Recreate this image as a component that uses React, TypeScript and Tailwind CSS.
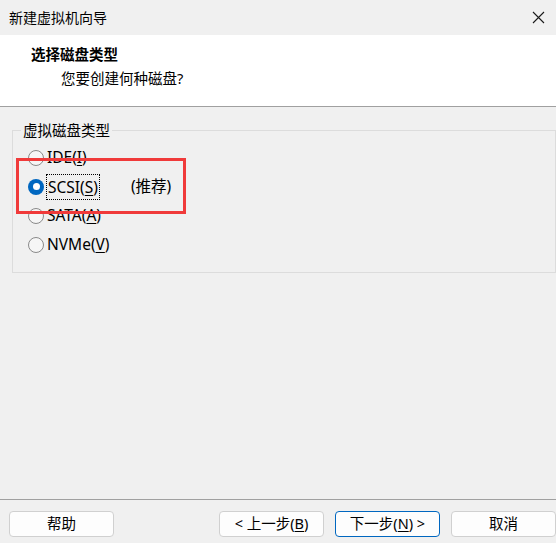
import React, { useState } from 'react';

const font = { fontFamily: '"Noto Sans", "Noto Sans CJK SC", sans-serif' };

const Mn: React.FC<{ c: string }> = ({ c }) => <span className="underline underline-offset-2">{c}</span>;

const Radio: React.FC<{ checked: boolean; onClick: () => void; children: React.ReactNode }> = ({ checked, onClick, children }) => (
  <div className="flex items-center h-[29px] cursor-default" onClick={onClick}>
    {checked ? (
      <span className="w-[16px] h-[16px] rounded-full bg-[#0067c0] flex items-center justify-center">
        <span className="w-[7px] h-[7px] rounded-full bg-white" />
      </span>
    ) : (
      <span className="w-[16px] h-[16px] rounded-full border border-[#8a8a8a] bg-[#f6f6f6]" />
    )}
    <div className="ml-[3px] flex items-center">{children}</div>
  </div>
);

const Btn: React.FC<{ primary?: boolean; children: React.ReactNode }> = ({ primary, children }) => (
  <button
    className={
      'w-[105px] h-[26px] rounded-[4px] bg-[#fdfdfd] text-[14.5px] text-black flex items-center justify-center ' +
      (primary ? 'border border-[#0067c0]' : 'border border-[#d0d0d0]')
    }
  >
    {children}
  </button>
);

const App: React.FC = () => {
  const [disk, setDisk] = useState('scsi');

  return (
    <div className="relative w-[556px] h-[543px] bg-[#f0f0f0] flex flex-col overflow-hidden text-black" style={font}>
      {/* Title bar */}
      <div className="h-[35px] flex items-center justify-between pl-[9px] pr-[11px]">
        <span className="text-[14px]">新建虚拟机向导</span>
        <svg width="13" height="13" viewBox="0 0 13 13">
          <path d="M1 1 L12 12 M12 1 L1 12" stroke="#1a1a1a" strokeWidth="1.1" />
        </svg>
      </div>

      {/* Header */}
      <div className="h-[72px] bg-white border-b border-[#a0a0a0] pt-[8px]">
        <div className="pl-[31px] text-[14.5px] font-bold leading-[22px]">选择磁盘类型</div>
        <div className="pl-[61px] text-[14.5px] leading-[22px] mt-[2px]">您要创建何种磁盘?</div>
      </div>

      {/* Body */}
      <div className="flex-1 pt-[13px]">
        <fieldset className="ml-[12px] w-[544px] h-[153px] border border-[#dcdcdc] px-0 pb-0 m-0">
          <legend className="ml-[8px] px-[2px] text-[14.5px] leading-[20px]">虚拟磁盘类型</legend>
          <div className="pl-[15px] pt-[3px] text-[15.5px]">
            <Radio checked={disk === 'ide'} onClick={() => setDisk('ide')}>
              <span>IDE(<Mn c="I" />)</span>
            </Radio>
            <Radio checked={disk === 'scsi'} onClick={() => setDisk('scsi')}>
              <span className="outline outline-1 outline-dotted outline-black px-[1px] leading-[24px]">
                SCSI(<Mn c="S" />)
              </span>
              <span className="ml-[32px]">(推荐)</span>
            </Radio>
            <Radio checked={disk === 'sata'} onClick={() => setDisk('sata')}>
              <span>SATA(<Mn c="A" />)</span>
            </Radio>
            <Radio checked={disk === 'nvme'} onClick={() => setDisk('nvme')}>
              <span>NVMe(<Mn c="V" />)</span>
            </Radio>
          </div>
        </fieldset>
      </div>

      {/* Footer */}
      <div className="h-[44px] border-t border-[#a0a0a0] pt-[11px] pl-[9px] flex">
        <Btn>帮助</Btn>
        <div className="ml-[105px] flex gap-[11px]">
          <Btn>&lt; 上一步(<Mn c="B" />)</Btn>
          <Btn primary>下一步(<Mn c="N" />) &gt;</Btn>
          <Btn>取消</Btn>
        </div>
      </div>

      {/* Highlight annotation */}
      <div className="absolute left-[16px] top-[158px] w-[170px] h-[56px] border-[3px] border-[#f03a3a] pointer-events-none" />
    </div>
  );
};

export default App;
